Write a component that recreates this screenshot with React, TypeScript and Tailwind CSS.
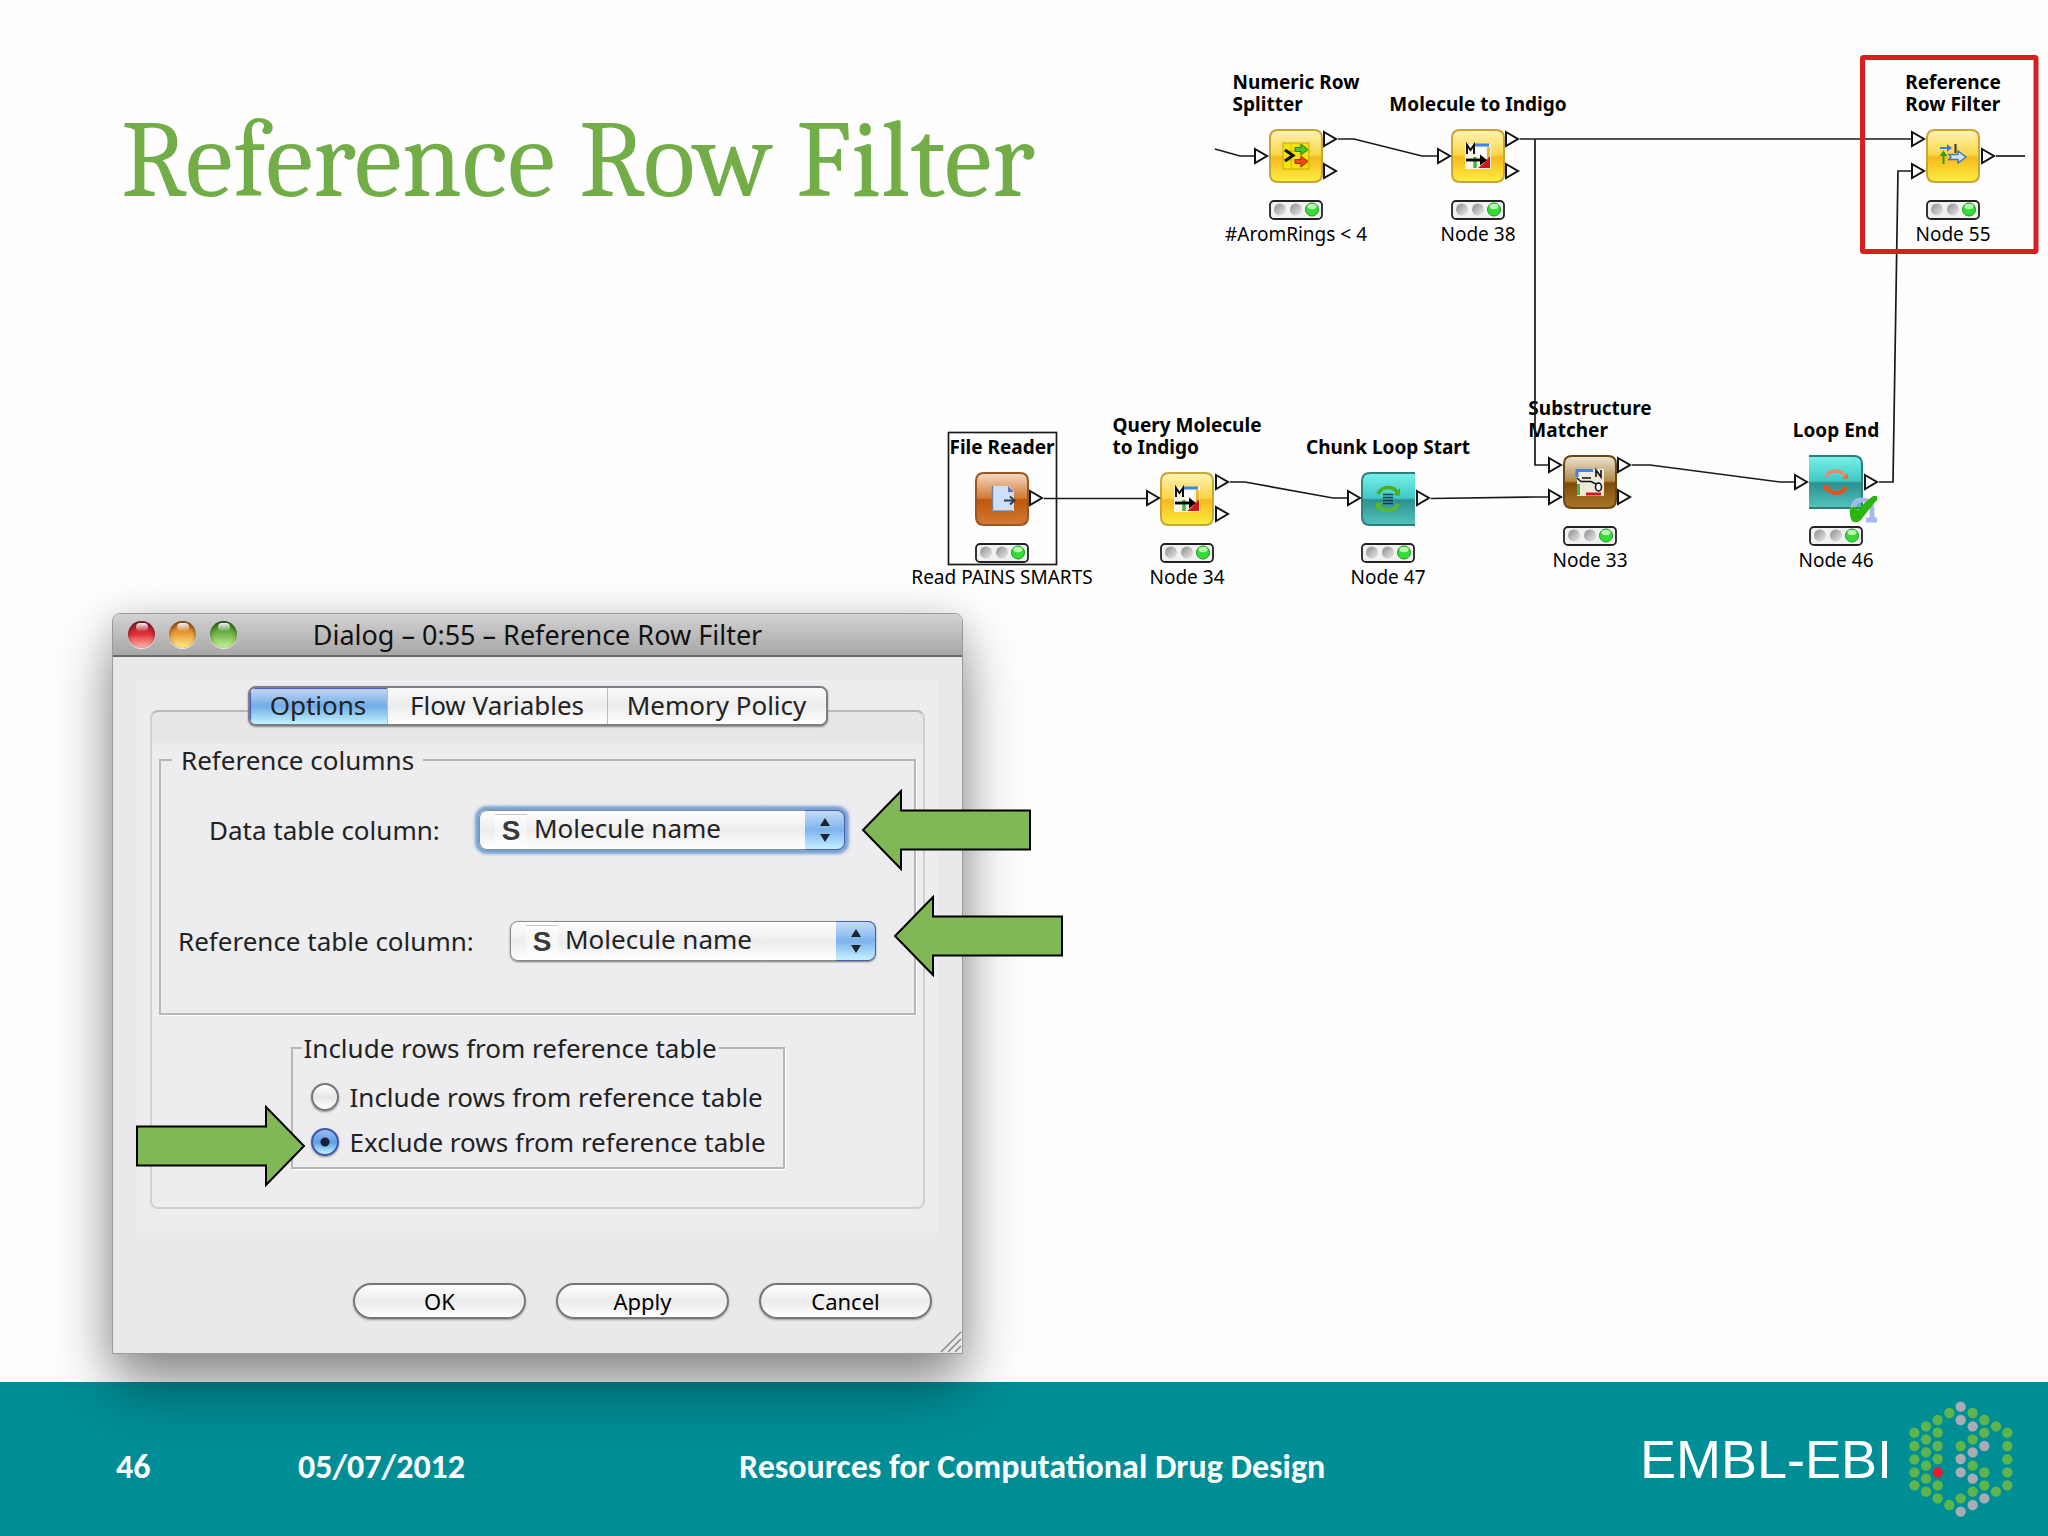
import React, { useState } from "react";

type Tone = "yellow" | "orange" | "teal" | "brown";
type Shape = "full" | "flatRight" | "flatLeft";

const TONES: Record<Tone, { edge: string; stops: [string, string, string, string] }> = {
  yellow: { edge: "#c9a535", stops: ["#fdf3b4", "#fbd648", "#f5b91f", "#fdee3f"] },
  orange: { edge: "#9c561f", stops: ["#f6dcc4", "#d07a38", "#bd570c", "#d27a34"] },
  teal: { edge: "#2b7f7c", stops: ["#7cf0ea", "#3fc9c5", "#2c9090", "#55c3bc"] },
  brown: { edge: "#6b4715", stops: ["#efe6d3", "#b0894a", "#804c0a", "#a9752c"] },
};

const SHAPES: Record<Shape, string> = {
  full: "M9 1H45Q53 1 53 9V45Q53 53 45 53H9Q1 53 1 45V9Q1 1 9 1Z",
  flatRight: "M54 1H9Q1 1 1 9V45Q1 53 9 53H54",
  flatLeft: "M0 1H45Q53 1 53 9V53H0",
};

function SplitterGlyph() {
  return (
    <g>
      <rect x="14" y="14" width="26" height="26" fill="#f6e410" stroke="#c7a800" />
      <path d="M22 14V40M31 14V40M14 22H40M14 31H40" stroke="#d8b400" />
      <path d="M16 21L24 26.500L16 32" fill="none" stroke="#111" strokeWidth="3" />
      <path d="M26 18.500H32V15L39 20.500L32 26V22.500H26Z" fill="#49c432" stroke="#2c7d1c" />
      <path d="M26 30.500H32V27L39 32.500L32 38V34.500H26Z" fill="#ee4a1c" stroke="#a52a0c" />
    </g>
  );
}

function IndigoGlyph() {
  return (
    <g>
      <rect x="14" y="15" width="26" height="25" fill="#fbf6e4" />
      <path d="M23 16H38" stroke="#3d86e8" strokeWidth="3" />
      <path d="M37.500 18V30" stroke="#eeb92c" strokeWidth="3" />
      <path d="M24 28V39" stroke="#45b54a" strokeWidth="3.500" />
      <path d="M39 27V39H27L33 34Z" fill="#d4161c" />
      <rect x="25" y="19" width="9" height="9" fill="#ffffff" />
      <path d="M16 25V16L19.500 21L23 16V25" fill="none" stroke="#111" strokeWidth="2" />
      <path d="M15 31H31" stroke="#000" strokeWidth="2.800" />
      <path d="M29 25.500L36 31L29 36.500Z" fill="#000" />
    </g>
  );
}

function ReferenceGlyph() {
  return (
    <g>
      <path d="M14 19H23" stroke="#3d7fd6" strokeWidth="2" />
      <path d="M21 15L26 19L21 23Z" fill="#3d7fd6" />
      <path d="M29.500 15V24" stroke="#333" strokeWidth="2" />
      <path d="M17.500 35V26" stroke="#2fa012" strokeWidth="2" />
      <path d="M13.500 27L17.500 21.500L21.500 27Z" fill="#2fa012" />
      <path d="M23 25.500H32V22L40 28L32 34V30.500H23L25 28Z" fill="#cfe6ee" stroke="#3f78b8" strokeWidth="1.400" />
    </g>
  );
}

function FileGlyph() {
  return (
    <g>
      <path d="M17 14H34L39 19V39H17Z" fill="#cfe0f6" />
      <path d="M17.500 14V39" stroke="#6f7fa0" strokeWidth="1.500" />
      <path d="M17 38.500H38" stroke="#8fa4cc" />
      <path d="M33 14L39 20H33Z" fill="#6f68b8" />
      <path d="M29 28.500H38M35 24.500L39.500 28.500L35 32.500" fill="none" stroke="#2f3f55" strokeWidth="2" />
    </g>
  );
}

function ChunkGlyph() {
  return (
    <g>
      <path d="M17 22Q20 15.500 27 15.500Q33 15.500 36 20" fill="none" stroke="#4faa1c" strokeWidth="3.500" />
      <path d="M39 16V23.500H32Z" fill="#4faa1c" />
      <path d="M37 32Q34 38.500 27 38.500Q21 38.500 18 34" fill="none" stroke="#5cb829" strokeWidth="3.500" />
      <path d="M15 38V30.500H22Z" fill="#5cb829" />
      <path d="M22 22.500H32M22 25.500H32M22 28.500H32M22 31.500H32" stroke="#0c3c4c" strokeWidth="1.500" />
    </g>
  );
}

function LoopEndGlyph() {
  return (
    <g>
      <path d="M17 22Q20 16 27 16Q33 16 37 22" fill="none" stroke="#f0876a" strokeWidth="3.500" />
      <path d="M39 18V24H33Z" fill="#ee6c48" />
      <path d="M37 32Q34 38 27 38Q21 38 17 32" fill="none" stroke="#e8501c" strokeWidth="4" />
      <path d="M15 36V30H21Z" fill="#e8501c" />
    </g>
  );
}

function MatcherGlyph() {
  return (
    <g>
      <rect x="14" y="14" width="27" height="27" fill="#efe9dc" />
      <path d="M14 22V15.500H30" fill="none" stroke="#3d86e8" strokeWidth="3" />
      <path d="M15.500 29V40" stroke="#45b54a" strokeWidth="3" />
      <path d="M23 39H38" stroke="#d4161c" strokeWidth="3" />
      <path d="M14 23L18 26.500H28L33 29M19 23H28" fill="none" stroke="#111" strokeWidth="1.500" />
      <path d="M33 22V15L38 22V15" fill="none" stroke="#111" strokeWidth="1.600" />
      <ellipse cx="35.500" cy="32" rx="3" ry="4" fill="#fff" stroke="#111" strokeWidth="1.600" />
    </g>
  );
}

interface FlowNode {
  id: string;
  lines: string[];
  caption: string;
  tone: Tone;
  shape: Shape;
  glyph: React.ReactNode;
  place: string;
}

const NODES: FlowNode[] = [
  { id: "splitter", lines: ["Numeric Row", "Splitter"], caption: "#AromRings < 4", tone: "yellow", shape: "full", glyph: <SplitterGlyph />, place: "left-[396px] top-[69px]" },
  { id: "indigo", lines: ["Molecule to Indigo"], caption: "Node 38", tone: "yellow", shape: "full", glyph: <IndigoGlyph />, place: "left-[578px] top-[69px]" },
  { id: "reference", lines: ["Reference", "Row Filter"], caption: "Node 55", tone: "yellow", shape: "full", glyph: <ReferenceGlyph />, place: "left-[1053px] top-[69px]" },
  { id: "reader", lines: ["File Reader"], caption: "Read PAINS SMARTS", tone: "orange", shape: "full", glyph: <FileGlyph />, place: "left-[102px] top-[412px]" },
  { id: "query", lines: ["Query Molecule", "to Indigo"], caption: "Node 34", tone: "yellow", shape: "full", glyph: <IndigoGlyph />, place: "left-[287px] top-[412px]" },
  { id: "chunk", lines: ["Chunk Loop Start"], caption: "Node 47", tone: "teal", shape: "flatRight", glyph: <ChunkGlyph />, place: "left-[488px] top-[412px]" },
  { id: "matcher", lines: ["Substructure", "Matcher"], caption: "Node 33", tone: "brown", shape: "full", glyph: <MatcherGlyph />, place: "left-[690px] top-[395px]" },
  { id: "loopend", lines: ["Loop End"], caption: "Node 46", tone: "teal", shape: "flatLeft", glyph: <LoopEndGlyph />, place: "left-[936px] top-[395px]" },
];

function NodeView({ node }: { node: FlowNode }) {
  const tone = TONES[node.tone];
  const grad = `tone-${node.id}`;
  const bead = `bead-${node.id}`;
  return (
    <div className={`absolute flex w-0 flex-col items-center whitespace-nowrap text-black ${node.place}`}>
      <div className="flex h-[46px] flex-col justify-end text-[19px] leading-[22px] font-bold">
        {node.lines.map((line) => (
          <span key={line}>{line}</span>
        ))}
      </div>
      <svg width="54" height="54" viewBox="0 0 54 54" className="mt-3.5 shrink-0" aria-hidden="true">
        <defs>
          <linearGradient id={grad} x1="0" y1="0" x2="0" y2="1">
            <stop offset="0" stopColor={tone.stops[0]} />
            <stop offset="0.480" stopColor={tone.stops[1]} />
            <stop offset="0.520" stopColor={tone.stops[2]} />
            <stop offset="1" stopColor={tone.stops[3]} />
          </linearGradient>
        </defs>
        <path d={SHAPES[node.shape]} fill={`url(#${grad})`} stroke={tone.edge} strokeWidth="2" />
        {node.glyph}
      </svg>
      <svg width="54" height="20" viewBox="0 0 54 20" className="mt-[17px] shrink-0" aria-hidden="true">
        <defs>
          <linearGradient id={bead} x1="0" y1="0" x2="1" y2="1">
            <stop offset="0" stopColor="#8b8b8b" />
            <stop offset="1" stopColor="#ececec" />
          </linearGradient>
        </defs>
        <rect x="1" y="1" width="52" height="18" rx="4" fill="#f1f1f1" stroke="#222" strokeWidth="1.800" />
        <circle cx="11" cy="9.500" r="6" fill={`url(#${bead})`} />
        <circle cx="27" cy="9.500" r="6" fill={`url(#${bead})`} />
        <circle cx="43" cy="9.500" r="6.500" fill="#35dc35" stroke="#159a1c" />
        <ellipse cx="43" cy="6.500" rx="4.500" ry="2.800" fill="#b8f7b4" />
      </svg>
      <span className="mt-[3px] text-[19px] leading-[22px]">{node.caption}</span>
    </div>
  );
}

const PORTS: [number, number][] = [
  [1254, 156], [1323, 139], [1323, 171], [1437, 156], [1505, 139], [1505, 171],
  [1911, 139], [1911, 171], [1981, 156], [1029, 498], [1146, 498], [1215, 482], [1215, 514],
  [1347, 498], [1416, 498], [1548, 465], [1548, 497], [1617, 465], [1617, 497], [1794, 482], [1864, 482],
];

function Workflow() {
  return (
    <section
      aria-label="Workflow"
      className="relative col-start-1 row-start-1 h-[613px] w-[1148px] justify-self-end font-['Noto_Sans','Open_Sans',sans-serif]"
    >
      {NODES.map((node) => (
        <NodeView key={node.id} node={node} />
      ))}
      <svg className="pointer-events-none absolute inset-0" width="1148" height="613" viewBox="900 0 1148 613" aria-hidden="true">
        <g fill="none" stroke="#1a1a1a" strokeWidth="1.700">
          <path d="M1215 149L1240 156H1254" />
          <path d="M1338 139H1354L1422 156H1437" />
          <path d="M1520 139H1911" />
          <path d="M1535 139V465H1548" />
          <path d="M1044 498.500H1146" />
          <path d="M1230 482H1245L1333 498H1347" />
          <path d="M1431 498.500L1535 497H1548" />
          <path d="M1632 465H1650L1780 482H1794" />
          <path d="M1879 482H1893L1898 171H1911" />
          <path d="M1996 156H2025" />
          <rect x="948.500" y="432.500" width="108" height="132" />
        </g>
        <g fill="#fff" stroke="#111" strokeWidth="2">
          {PORTS.map(([x, y]) => (
            <path key={`${x}-${y}`} d={`M${x + 1} ${y - 7}L${x + 13} ${y}L${x + 1} ${y + 7}Z`} />
          ))}
        </g>
        <rect x="1862.500" y="57.500" width="173.500" height="194" rx="1" fill="none" stroke="#d71f20" strokeWidth="5" />
        <g>
          <path d="M1853 510Q1853 500 1862 500Q1871 500 1872 508V519M1866 520H1877" fill="none" stroke="#a9b8ea" strokeWidth="5" />
          <path d="M1850 509Q1852 506 1856 507L1858 510Q1866 501 1873 496H1877V500Q1869 509 1861 520Q1856 524 1852 521Q1849 515 1850 509Z" fill="#2bb50f" />
        </g>
      </svg>
    </section>
  );
}

function ColumnSelect({ id, focused }: { id: string; focused?: boolean }) {
  return (
    <div
      className={
        focused
          ? "relative h-10 w-[366px] rounded-lg shadow-[0_0_3px_4px_#77a3d3]"
          : "relative h-10 w-[366px] rounded-lg shadow-[0_1px_2px_#777]"
      }
    >
      <select
        id={id}
        className="size-full appearance-none rounded-lg border border-[#8a8a8f] bg-linear-to-b from-white via-[#ececec] to-white pb-1 pl-[54px] text-[26px] text-[#222] outline-none"
      >
        <option>Molecule name</option>
      </select>
      <span
        aria-hidden="true"
        className="pointer-events-none absolute top-1 left-4 h-8 w-8 border-t border-[#c9c9cd] bg-white/50 text-center font-['Liberation_Sans',sans-serif] text-[28px] leading-8 font-bold text-[#3a3a3a]"
      >
        S
      </span>
      <span className="pointer-events-none absolute inset-y-0 right-0 flex w-10 items-center justify-center rounded-r-lg border border-l-0 border-[#4a5fb4] bg-linear-to-b from-[#c4dcf6] via-[#7db4ee] to-[#c6f0fe]">
        <svg width="12" height="26" viewBox="0 0 12 26" aria-hidden="true">
          <path d="M6 1L11 9H1ZM6 25L11 17H1Z" fill="#1d2430" />
        </svg>
      </span>
    </div>
  );
}

function Lamp({ label, look }: { label: string; look: string }) {
  return (
    <button
      type="button"
      aria-label={label}
      className={`relative size-[27px] rounded-full shadow-[0_1px_1px_#eee,inset_0_2px_4px_rgba(0,0,0,0.45)] ${look}`}
    >
      <span className="absolute top-0.5 left-2 h-2 w-3 rounded-full bg-linear-to-b from-white/95 to-white/10" />
    </button>
  );
}

function Arrow({ place, right }: { place: string; right?: boolean }) {
  return (
    <svg width="170" height="82" viewBox="0 0 170 82" className={`pointer-events-none absolute ${place}`} aria-hidden="true">
      <path
        d={right ? "M1 21.500H130V2L168 41L130 80V60.500H1Z" : "M169 21.500H40V2L2 41L40 80V60.500H169Z"}
        fill="#80b856"
        stroke="#000"
        strokeWidth="2"
      />
    </svg>
  );
}

const TABS = [
  { name: "Options", width: "w-[138px]" },
  { name: "Flow Variables", width: "w-[220px]" },
  { name: "Memory Policy", width: "w-[218px]" },
];

const ROW_CHOICES = ["Include rows from reference table", "Exclude rows from reference table"];

function FilterDialog() {
  const [tab, setTab] = useState("Options");
  const [choice, setChoice] = useState(ROW_CHOICES[1]);
  return (
    <section
      role="dialog"
      aria-labelledby="dialog-title"
      className="relative z-10 ml-28 w-[851px] rounded-t-lg border border-[#9b9b9d] bg-[#e9e8ea] font-['Noto_Sans','Open_Sans',sans-serif] text-[26px] leading-[30px] text-[#222] shadow-[0_32px_60px_rgba(0,0,0,0.42),0_4px_36px_rgba(0,0,0,0.14)]"
    >
      <header className="grid h-[43px] grid-cols-[1fr_auto_1fr] items-center rounded-t-lg border-b-2 border-[#6a6a6a] bg-linear-to-b from-[#d2d2d2] to-[#a7a7a7] px-[15px]">
        <div className="flex gap-3.5">
          <Lamp label="Close" look="bg-linear-to-b from-[#a3202a] via-[#e0303a] to-[#ffb4b4]" />
          <Lamp label="Minimize" look="bg-linear-to-b from-[#b5601c] via-[#eda03a] to-[#fff08c]" />
          <Lamp label="Zoom" look="bg-linear-to-b from-[#3d7a26] via-[#74b84a] to-[#cdf59a]" />
        </div>
        <h2 id="dialog-title" className="text-[27px] text-[#111]">
          Dialog – 0:55 – Reference Row Filter
        </h2>
      </header>

      <div className="mx-6 mt-[23px] bg-[#edecee] px-[13px] pt-[6px] pb-6">
        <div role="tablist" className="relative z-10 flex justify-center">
          <div className="flex h-10 overflow-hidden rounded-lg border-2 border-[#7d7d82] bg-white shadow-[0_1px_2px_#888]">
            {TABS.map(({ name, width }) => (
              <button
                key={name}
                type="button"
                role="tab"
                aria-selected={tab === name}
                onClick={() => setTab(name)}
                className={`${width} border-r border-[#bcbcc0] pb-0.5 last:border-r-0 ${
                  tab === name
                    ? "bg-linear-to-b from-[#c9d9f4] via-[#71ace6] to-[#c2f3ff] shadow-[inset_1px_1px_1px_#4a4fb0]"
                    : "bg-linear-to-b from-[#fafafa] via-[#ededee] to-white"
                }`}
              >
                {name}
              </button>
            ))}
          </div>
        </div>

        <div role="tabpanel" className="-mt-4 rounded-lg border-2 border-[#cfced1] border-t-[#b9b9bc] bg-linear-to-b from-[#e6e5e7] from-[30px] to-[#edecee] to-[32px] px-[7px] pt-[33px] pb-[38px]">
          <fieldset className="border-2 border-[#b7b6b9] pr-[34px] pb-[52px] pl-[17px] shadow-[1px_1px_0_#fff]">
            <legend className="-ml-[6px] px-[9px]">Reference columns</legend>
            <div className="mt-[35px] ml-[31px] flex items-center gap-9">
              <label htmlFor="data-column" className="w-[234px]">Data table column:</label>
              <ColumnSelect id="data-column" focused />
            </div>
            <div className="mt-[71px] flex items-center gap-8">
              <label htmlFor="reference-column" className="w-[300px]">Reference table column:</label>
              <ColumnSelect id="reference-column" />
            </div>
          </fieldset>

          <fieldset className="mx-auto mt-[18px] w-[494px] border-2 border-[#b7b6b9] px-[9px] pb-[10px] shadow-[1px_1px_0_#fff]">
            <legend className="px-[2px]">Include rows from reference table</legend>
            <div className="flex flex-col gap-[15px] pt-[19px] pl-[9px]">
              {ROW_CHOICES.map((text) => (
                <label key={text} className="flex items-center gap-[11px]">
                  <input
                    type="radio"
                    name="rows"
                    checked={choice === text}
                    onChange={() => setChoice(text)}
                    className="size-7 shrink-0 appearance-none rounded-full border-2 border-[#77777b] bg-linear-to-b from-white via-[#e6e6e8] to-white shadow-[0_1px_2px_#888] checked:border-[#3f56a6] checked:bg-[radial-gradient(circle_at_center,#17213a_0_4px,transparent_5px),linear-gradient(#9dbdf0,#5b9be6,#c2f3ff)]"
                  />
                  {text}
                </label>
              ))}
            </div>
          </fieldset>
        </div>
      </div>

      <div className="mt-[50px] flex justify-end gap-[30px] pr-[30px] pb-[34px]">
        {["OK", "Apply", "Cancel"].map((name) => (
          <button
            key={name}
            type="button"
            className="h-9 w-[173px] rounded-full border-2 border-[#77777a] bg-linear-to-b from-white via-[#ebebed] to-white text-[22px] leading-8 text-black shadow-[0_1px_2px_#999]"
          >
            {name}
          </button>
        ))}
      </div>
      <svg width="22" height="22" viewBox="0 0 22 22" className="absolute right-0 bottom-0" aria-hidden="true">
        <path d="M1 21L21 1M8 21L21 8M15 21L21 15" stroke="#8c8c8c" strokeWidth="1.600" />
      </svg>

      <Arrow place="top-[175px] left-[748px]" />
      <Arrow place="top-[281px] left-[780px]" />
      <Arrow place="top-[491px] left-[23px]" right />
    </section>
  );
}

const G = "#5fb54c";
const S = "#aaacb4";
const R = "#e81b2d";
const DOTS: [number, [number, string][]][] = [
  [71, [[131, G], [171, G], [211, G], [250, G], [289, G]]],
  [106, [[112, G], [151, G], [190, G], [230, G], [269, G], [308, G]]],
  [141, [[93, G], [131, G], [171, G], [210, G], [250, R], [289, G], [328, G]]],
  [176, [[72, G], [348, G]]],
  [210, [[53, S], [93, S], [171, G], [210, S], [250, S], [328, G], [368, S]]],
  [246, [[72, G], [112, S], [151, G], [190, S], [230, G], [269, S], [308, G], [348, S]]],
  [281, [[93, G], [131, G], [171, S], [250, G], [289, G], [328, S]]],
  [316, [[112, G], [308, G]]],
  [350, [[131, G], [171, G], [211, G], [250, G], [289, G]]],
];

function Footer() {
  return (
    <footer className="flex items-center bg-[#008e96] py-[17px] pr-8 pl-[116px] text-white">
      <div className="flex flex-1 items-baseline pt-4 font-['Calibri','Carlito','Lato',sans-serif] text-[34px] leading-9 font-bold">
        <span className="w-[182px]">46</span>
        <span className="w-[441px]">05/07/2012</span>
        <span>Resources for Computational Drug Design</span>
      </div>
      <div className="flex items-center gap-3.5">
        <span className="font-['Liberation_Sans',sans-serif] text-[54px] leading-[60px]">EMBL-EBI</span>
        <svg width="110" height="120" viewBox="46 30 330 360" aria-hidden="true">
          {DOTS.map(([x, column]) =>
            column.map(([y, fill]) => <circle key={`${x}-${y}`} cx={x} cy={y} r="15.500" fill={fill} />),
          )}
        </svg>
      </div>
    </footer>
  );
}

export default function App() {
  return (
    <div className="flex min-h-screen flex-col bg-[#fefefe]">
      <main className="flex-1 pb-7">
        <div className="grid">
          <h1 className="col-start-1 row-start-1 pt-[99px] pl-[121px] font-['Cambria','Caladea','Liberation_Serif',serif] text-[108px] leading-[124px] text-[#72ad47]">
            Reference Row Filter
          </h1>
          <Workflow />
        </div>
        <FilterDialog />
      </main>
      <Footer />
    </div>
  );
}
